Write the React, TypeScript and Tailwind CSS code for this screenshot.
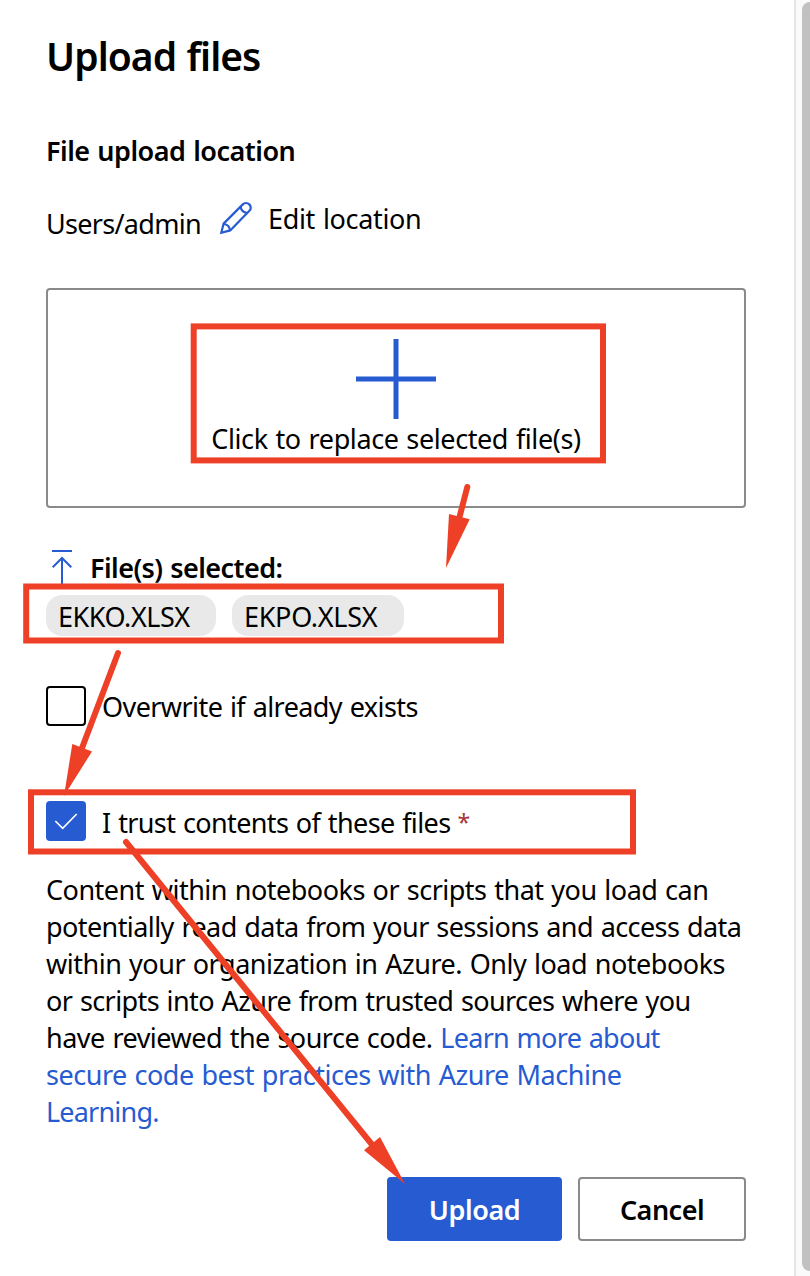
import type { ReactNode } from "react";

function PencilIcon() {
  return (
    <svg className="block h-[34px] w-[34px]" viewBox="0 0 34 34" fill="none" stroke="#265bd2" strokeWidth="2.2" strokeLinejoin="miter">
      <path d="M2.300 31.800 L4.600 22.600 L23.800 3.400 C25.600 1.600 28.400 1.500 30.300 3.400 C32.200 5.300 32.200 8 30.400 9.800 L11.200 29.400 Z" />
      <path d="M21.600 5.600 Q22.400 11.200 28.200 12" />
      <path d="M4.600 23 Q10.400 23.600 11 29.400" />
    </svg>
  );
}

function UploadIcon() {
  return (
    <svg className="block h-[36px] w-[20px]" viewBox="0 0 20 36" fill="none" stroke="#265bd2" strokeWidth="2">
      <path d="M0 1 H20 M10 8 V36 M.7 17.300 L10 8 L19.300 17.300" />
    </svg>
  );
}

function Chip({ className, children }: { className: string; children: ReactNode }) {
  return (
    <div className={`h-[41px] rounded-[16px] bg-[#e9e9e9] pl-3 text-[27px] leading-[44px] whitespace-nowrap ${className}`}>
      {children}
    </div>
  );
}

function Annotations() {
  return (
    <div className="pointer-events-none absolute inset-0">
      <svg className="absolute inset-0 h-[1276px] w-[810px]" viewBox="0 0 810 1276" fill="#ed4027">
        <g fill="none" stroke="#ed4027" strokeWidth="6">
          <rect x="193.700" y="326.400" width="409.300" height="134" />
          <rect x="26.200" y="586.500" width="474.800" height="54" />
          <rect x="31" y="792.300" width="602" height="59.200" />
        </g>
        <g stroke="#ed4027" strokeWidth="6" strokeLinecap="round">
          <path d="M467.300 487 L459 519" />
          <path d="M118 653 L82 748" />
          <path d="M126 842 L374 1147" />
        </g>
        <path d="M449 514 L469.700 519.300 L446 568 Z" />
        <path d="M72.300 744 L92 751.500 L64 796 Z" />
        <path d="M380 1137 L364 1150.300 L405 1184 Z" />
      </svg>
    </div>
  );
}

export default function App() {
  return (
    <div className="relative flex h-[1276px] w-[810px] overflow-hidden bg-white font-['Noto_Sans',sans-serif] text-[27px] leading-[37px] text-black [word-spacing:1.2px]">
      <main className="flex w-[794px] flex-col pt-7 pr-12 pl-[46px]">
        <h1 className="h-14 text-[39px] leading-[56px] font-semibold tracking-[-0.95px] whitespace-nowrap">Upload files</h1>
        <h2 className="mt-[49px] h-9 leading-9 font-semibold tracking-[-0.5px] whitespace-nowrap">File upload location</h2>

        <div className="mt-[32px] flex h-[37px] items-start whitespace-nowrap">
          <span className="mt-[5px] w-[173px] leading-9 tracking-[-0.7px]">Users/admin</span>
          <PencilIcon />
          <span className="ml-[15px] leading-9 tracking-[-0.33px]">Edit location</span>
        </div>

        <div className="mt-[50px] flex h-[220px] shrink-0 flex-col items-center rounded-[4px] border-2 border-[#8a8a8a] pt-[49px]">
          <svg className="block h-20 w-20" viewBox="0 0 80 80" stroke="#265bd2" strokeWidth="5">
            <path d="M0 40 H80 M40 0 V80" />
          </svg>
          <span className="mt-[2px] leading-9 tracking-[-0.4px] whitespace-nowrap">Click to replace selected file(s)</span>
        </div>

        <div className="mt-[42px] flex h-9 items-start">
          <div className="ml-[6px]"><UploadIcon /></div>
          <span className="ml-[18px] leading-[35px] font-semibold tracking-[-0.55px] whitespace-nowrap">File(s) selected:</span>
        </div>
        <div className="mt-[9px] flex gap-4">
          <Chip className="w-[170px] tracking-[-0.45px]">EKKO.XLSX</Chip>
          <Chip className="w-[172px] tracking-[-0.3px]">EKPO.XLSX</Chip>
        </div>

        <label className="mt-[50px] flex h-10 items-center">
          <span className="h-10 w-10 rounded-[4px] border-2 border-black" />
          <span className="ml-4 tracking-[-0.58px] whitespace-nowrap">Overwrite if already exists</span>
        </label>
        <label className="mt-[75px] flex h-10 items-center">
          <span className="h-10 w-10 rounded-[4px] bg-[#265bd2]">
            <svg className="block h-10 w-10" viewBox="0 0 40 40" fill="none" stroke="#fff" strokeWidth="1.700">
              <path d="M9.300 20 L16.700 27.300 L30.700 13" />
            </svg>
          </span>
          <span className="mt-[3px] ml-4 flex tracking-[-0.62px] whitespace-nowrap">
            I trust contents of these files
            <span className="ml-[7px] text-[23px] text-[#a4373a]">*</span>
          </span>
        </label>

        <p className="mt-[30px] whitespace-nowrap">
          <span className="block tracking-[-0.5px]">Content within notebooks or scripts that you load can</span>
          <span className="block tracking-[-0.58px]">potentially read data from your sessions and access data</span>
          <span className="block tracking-[-0.49px]">within your organization in Azure. Only load notebooks</span>
          <span className="block tracking-[-0.6px]">or scripts into Azure from trusted sources where you</span>
          <span className="block tracking-[-0.52px]">have reviewed the source code. <a className="tracking-[-0.71px] text-[#265bd2]">Learn more about</a></span>
          <a className="block tracking-[-0.48px] text-[#265bd2]">secure code best practices with Azure Machine</a>
          <a className="block tracking-[-0.8px] text-[#265bd2]">Learning.</a>
        </p>

        <div className="mt-[47px] flex justify-end gap-4 font-semibold">
          <button className="h-16 w-[175px] rounded-[4px] bg-[#265bd2] tracking-[-0.4px] text-white">Upload</button>
          <button className="h-16 w-[168px] rounded-[4px] border-2 border-[#8a8a8a] tracking-[-0.5px]">Cancel</button>
        </div>
      </main>
      <div className="flex w-4 border-l-2 border-[#e6e6e6] bg-[#fafafa] pt-[2px] pl-[6px]">
        <div className="h-[1269px] w-4 shrink-0 rounded-[8px] bg-[#c1c1c1]" />
      </div>
      <Annotations />
    </div>
  );
}
